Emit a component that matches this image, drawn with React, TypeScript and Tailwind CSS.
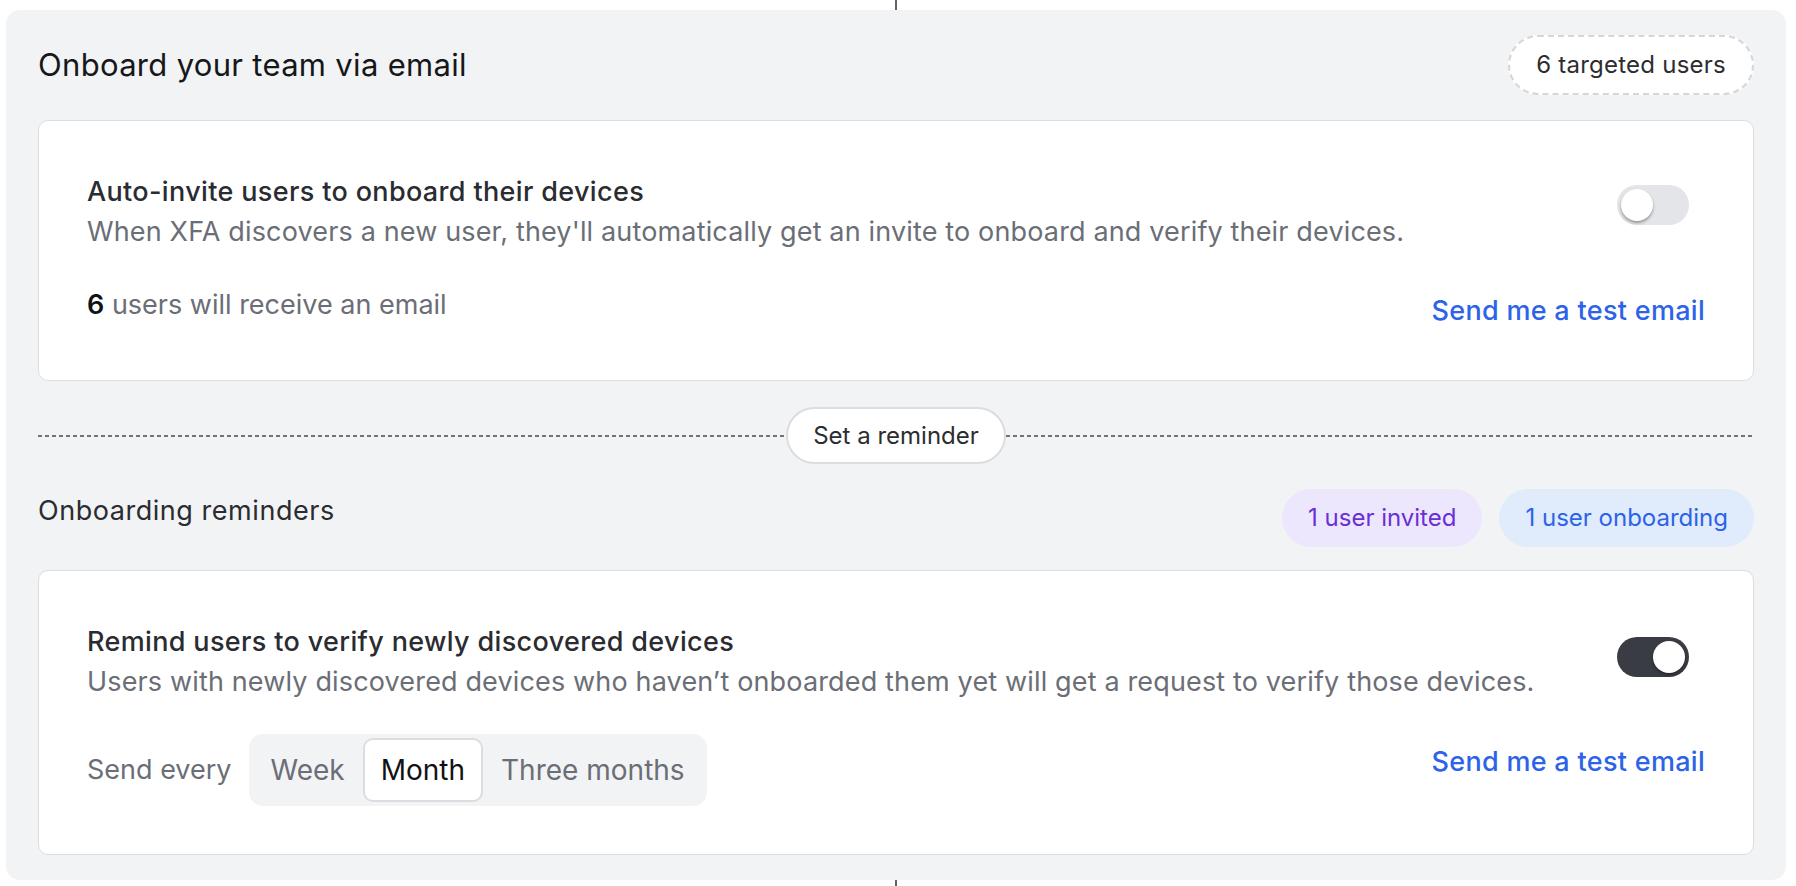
import { useState } from "react"

const Toggle = ({ on, onChange }: { on: boolean; onChange: () => void }) => (
  <button
    onClick={onChange}
    className={`relative flex h-[40px] w-[72px] shrink-0 items-center rounded-full px-[4px] ${
      on ? "justify-end bg-[#393c43]" : "justify-start bg-[#e4e5e8]"
    }`}>
    <span className="h-[32px] w-[32px] rounded-full bg-white shadow-[0_2px_3px_rgba(0,0,0,0.35)]" />
  </button>
)

const DashedLine = () => (
  <div className="h-[2px] flex-1 bg-[repeating-linear-gradient(90deg,#70737b_0_4px,transparent_4px_7px)]" />
)

const periods = ["Week", "Month", "Three months"]

export default function App() {
  const [autoInvite, setAutoInvite] = useState(false)
  const [remind, setRemind] = useState(true)
  const [period, setPeriod] = useState("Month")

  return (
    <div className="ml-[6px] flex w-[1780px] flex-col items-center bg-white font-['Inter',sans-serif]">
      <div className="h-[10px] w-[2px] bg-[#5f636b]" />
      <div className="w-full rounded-[14px] bg-[#f2f3f5] px-[32px] pb-[25px] pt-[25px]">
        {/* Header */}
        <div className="mb-[25px] flex items-center justify-between">
          <h1 className="text-[31px] leading-[40px] tracking-[0.01em] text-[#16171a]">Onboard your team via email</h1>
          <div className="flex h-[60px] items-center rounded-full border-2 border-dashed border-[#d4d6da] bg-white px-[26px] text-[24px] tracking-[0.01em] text-[#2b2d31]">
            6 targeted users
          </div>
        </div>

        {/* Auto-invite card */}
        <div className="rounded-[10px] border border-[#dcdde0] bg-white px-[48px] pb-[50px] pt-[52px]">
          <div className="flex items-start justify-between">
            <div>
              <div className="text-[27px] font-medium leading-[38px] tracking-[0.35px] text-[#2a2c31]">
                Auto-invite users to onboard their devices
              </div>
              <div className="mt-[2px] text-[27px] leading-[38px] tracking-[0.15px] text-[#6b6e76]">
                When XFA discovers a new user, they'll automatically get an invite to onboard and verify their devices.
              </div>
            </div>
            <div className="mr-[16px] mt-[12px]">
              <Toggle on={autoInvite} onChange={() => setAutoInvite(!autoInvite)} />
            </div>
          </div>
          <div className="mt-[35px] flex items-start justify-between">
            <div className="text-[27px] leading-[38px] text-[#6b6e76]">
              <span className="font-semibold text-[#111214]">6</span> users will receive an email
            </div>
            <button className="pt-[6px] text-[27px] font-medium leading-[38px] tracking-[0.3px] text-[#2c63e8]">
              Send me a test email
            </button>
          </div>
        </div>

        {/* Divider */}
        <div className="mt-[26px] flex items-center">
          <DashedLine />
          <button className="flex h-[57px] w-[220px] items-center justify-center rounded-full border-2 border-[#dcdde0] bg-white text-[24px] text-[#2b2d31]">
            Set a reminder
          </button>
          <DashedLine />
        </div>

        {/* Reminders header */}
        <div className="mb-[23px] mt-[25px] flex items-center justify-between">
          <h2 className="-mt-[14px] text-[27px] leading-[38px] tracking-[0.02em] text-[#2a2c31]">Onboarding reminders</h2>
          <div className="flex gap-[17px]">
            <div className="flex h-[58px] items-center rounded-full bg-[#ece7fd] px-[26px] text-[24px] text-[#6a2fd6]">
              1 user invited
            </div>
            <div className="flex h-[58px] items-center rounded-full bg-[#e0ebfc] px-[26px] text-[24px] text-[#2c63e8]">
              1 user onboarding
            </div>
          </div>
        </div>

        {/* Reminder card */}
        <div className="rounded-[10px] border border-[#dcdde0] bg-white px-[48px] pb-[48px] pt-[52px]">
          <div className="flex items-start justify-between">
            <div>
              <div className="text-[27px] font-medium leading-[38px] tracking-[0.35px] text-[#2a2c31]">
                Remind users to verify newly discovered devices
              </div>
              <div className="mt-[2px] text-[27px] leading-[38px] tracking-[0.15px] text-[#6b6e76]">
                Users with newly discovered devices who haven’t onboarded them yet will get a request to verify those devices.
              </div>
            </div>
            <div className="mr-[16px] mt-[14px]">
              <Toggle on={remind} onChange={() => setRemind(!remind)} />
            </div>
          </div>
          <div className="mt-[33px] flex items-start justify-between">
            <div className="flex items-center gap-[17px]">
              <span className="text-[27px] text-[#6b6e76]">Send every</span>
              <div className="flex h-[72px] items-center rounded-[14px] bg-[#f2f3f5] p-[4px]">
                {periods.map((p) => (
                  <button
                    key={p}
                    onClick={() => setPeriod(p)}
                    className={`flex h-[64px] items-center rounded-[10px] px-[16px] text-[28px] ${
                      period === p
                        ? "border-2 border-[#dcdde0] bg-white text-[#111214]"
                        : "border-2 border-transparent text-[#6b6e76]"
                    }`}>
                    {p}
                  </button>
                ))}
              </div>
            </div>
            <button className="pt-[9px] text-[27px] font-medium leading-[38px] tracking-[0.3px] text-[#2c63e8]">
              Send me a test email
            </button>
          </div>
        </div>
      </div>
      <div className="h-[7px] w-[2px] bg-[#5f636b]" />
    </div>
  )
}
